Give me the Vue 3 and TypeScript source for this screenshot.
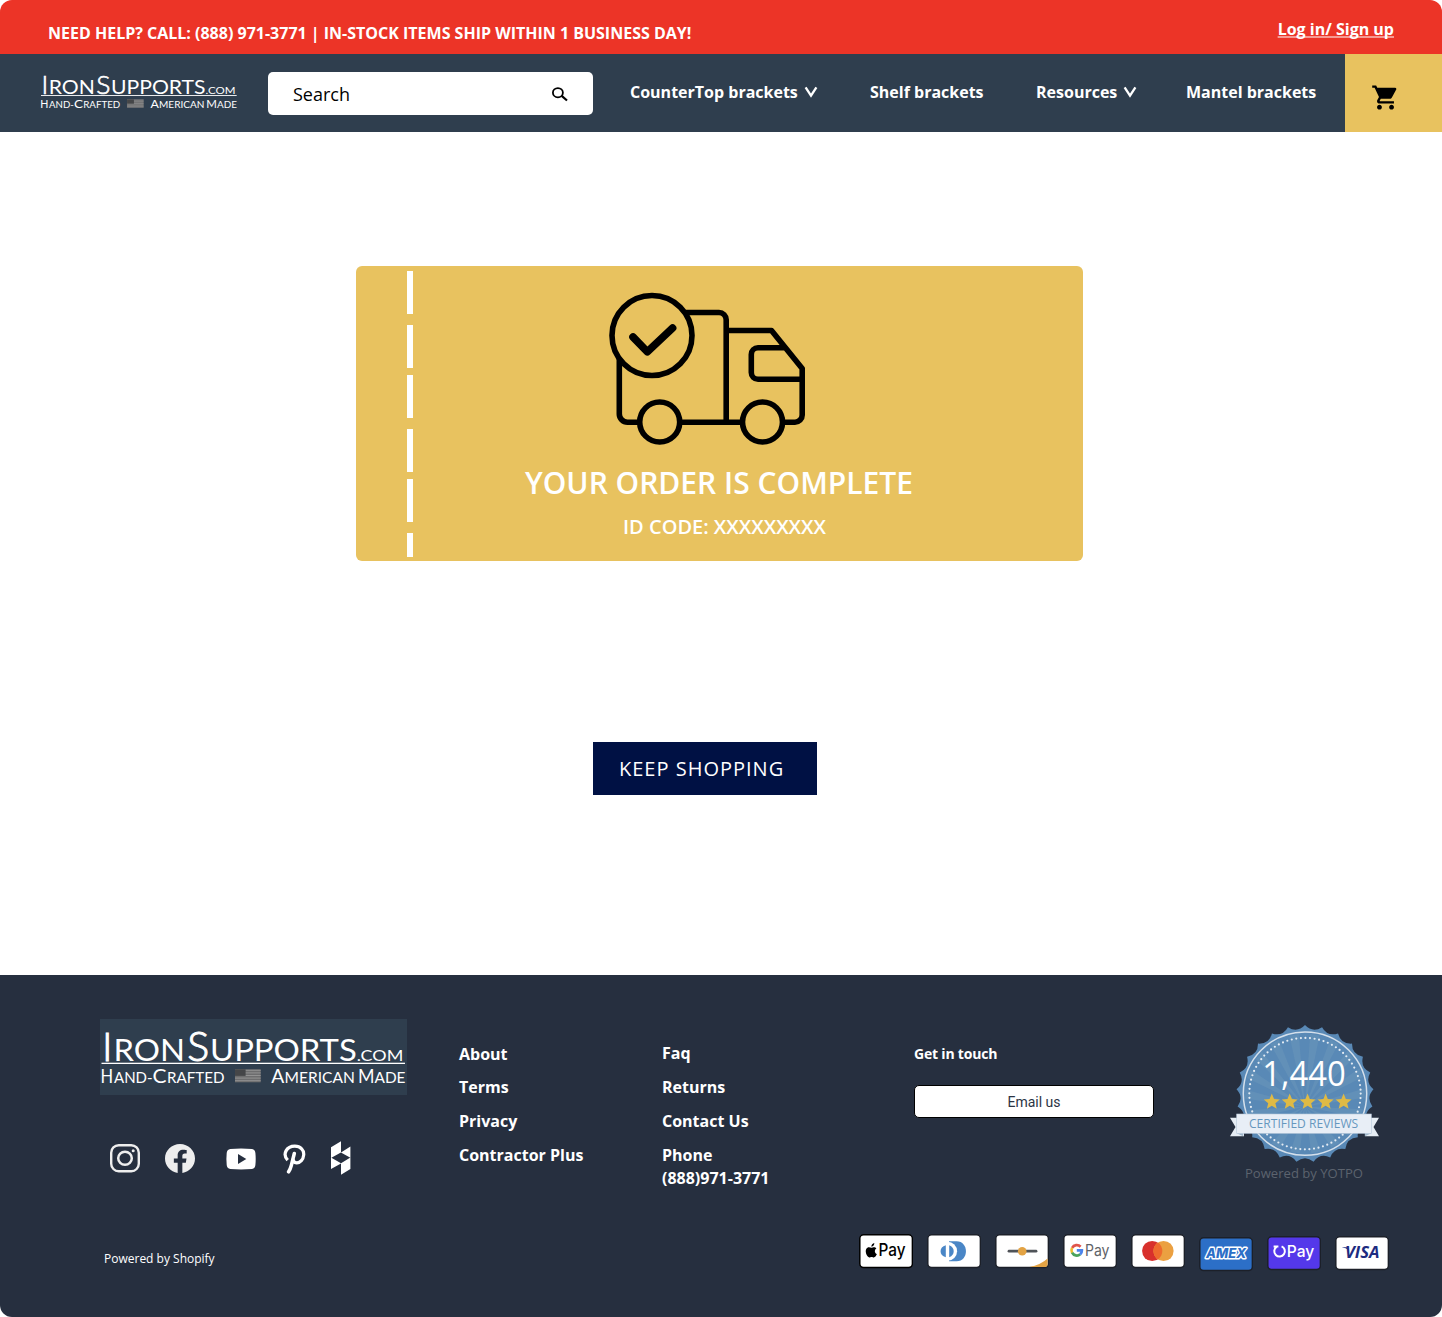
<script setup lang="ts">
interface NavItem {
  label: string
  menu: boolean
}

const navItems: NavItem[] = [
  { label: 'CounterTop brackets', menu: true },
  { label: 'Shelf brackets', menu: false },
  { label: 'Resources', menu: true },
  { label: 'Mantel brackets', menu: false },
]

const companyLinks: string[] = ['About', 'Terms', 'Privacy', 'Contractor Plus']
const supportLinks: string[] = ['Faq', 'Returns', 'Contact Us']

// Wordmark pieces: large initials alternate with small capitals
interface LogoPiece {
  t: string
  x: number
  y: number
  size: number
  w: number
  light?: boolean
}
const logoPieces: LogoPiece[] = [
  { t: 'I', x: 2.1, y: 42, size: 40, w: 10.5, light: true },
  { t: 'RON', x: 13.5, y: 42, size: 30.5, w: 71.5 },
  { t: 'S', x: 87.2, y: 42, size: 41, w: 22, light: true },
  { t: 'UPPORTS', x: 110, y: 42, size: 30.5, w: 146.7 },
  { t: '.COM', x: 256.8, y: 42, size: 15.5, w: 46.500 },
  { t: 'H', x: 0.5, y: 63.6, size: 18.6, w: 12.6 },
  { t: 'AND-', x: 14, y: 63.6, size: 15, w: 38.5 },
  { t: 'C', x: 52.5, y: 63.6, size: 18.6, w: 14 },
  { t: 'RAFTED', x: 67, y: 63.6, size: 15, w: 57.5 },
  { t: 'A', x: 171.3, y: 63.6, size: 18.6, w: 13 },
  { t: 'MERICAN', x: 184.6, y: 63.6, size: 15, w: 70.3 },
  { t: 'M', x: 257.9, y: 63.6, size: 18.6, w: 16.5 },
  { t: 'ADE', x: 274.5, y: 63.6, size: 15, w: 31 },
]

// Geometry of the review seal
const cx = 95
const cy = 83.6
const polar = (r: number, deg: number): string => {
  const a = ((deg - 90) * Math.PI) / 180
  return `${(cx + r * Math.cos(a)).toFixed(2)} ${(cy + r * Math.sin(a)).toFixed(2)}`
}
const points = 25
const step = 360 / points
let sealPath = `M${polar(68.6, 0)}`
for (let i = 0; i < points; i++) {
  sealPath += ` Q${polar(61, (i + 0.5) * step)} ${polar(68.6, (i + 1) * step)}`
}
sealPath += 'Z'

const rays: string[] = Array.from({ length: 18 }, (_, i) => {
  const a = i * 20 + 5
  return `M${cx} ${cy + 13}L${polar(60, a)}L${polar(60, a + 9)}Z`
})

const star = (x: number, y: number, r: number): string =>
  Array.from({ length: 10 }, (_, i) => {
    const a = ((i * 36 - 90) * Math.PI) / 180
    const d = i % 2 ? r * 0.45 : r
    return `${(x + d * Math.cos(a)).toFixed(2)},${(y + d * Math.sin(a)).toFixed(2)}`
  }).join(' ')
const stars: string[] = [61.8, 79.7, 97.6, 115.6, 133.6].map((x) => star(x, 92, 8.4))

const brands: string[] = ['apple', 'diners', 'discover', 'google', 'mastercard', 'amex', 'shop', 'visa']
</script>

<template>
  <div class="page">
    <div class="topbar">
      <p>NEED HELP? CALL: (888) 971-3771 | IN-STOCK ITEMS SHIP WITHIN 1 BUSINESS DAY!</p>
      <a class="login">Log in/ Sign up</a>
    </div>

    <header class="header">
      <svg class="logo header-logo" width="198" height="49" viewBox="0 0 307 76">
        <text v-for="p in logoPieces" :key="p.t" :class="{ light: p.light }" :x="p.x" :y="p.y" :font-size="p.size" :textLength="p.w" lengthAdjust="spacingAndGlyphs">{{ p.t }}</text>
        <rect x="1.5" y="43.6" width="303.5" height="1.4" fill="#fff" />
        <rect x="135" y="50.3" width="25.7" height="13" fill="#6d6d6e" />
        <path d="M135 51.3h25.7M135 53.9h25.7M135 56.5h25.7M135 59.1h25.7M135 61.7h25.7" stroke="#929292" stroke-width="1" />
        <rect x="135" y="50.3" width="10.6" height="6.6" fill="#454648" />
      </svg>
      <div class="search">
        <span>Search</span>
        <svg width="18" height="16" viewBox="0 0 18 16" fill="none" stroke="#000">
          <ellipse cx="6.9" cy="6.7" rx="5" ry="4.6" stroke-width="1.8" />
          <path d="M10.7 9.9l5.300 4.600" stroke-width="2.2" />
        </svg>
      </div>
      <nav class="nav">
        <a v-for="item in navItems" :key="item.label">
          {{ item.label }}
          <svg v-if="item.menu" width="14" height="12" viewBox="0 0 14 12">
            <path d="M1.6 1.400L7 9.600l5.400-8.200" fill="none" stroke="#fff" stroke-width="2.300" />
          </svg>
        </a>
      </nav>
      <div class="cart">
        <svg width="29" height="29" viewBox="0 0 24 24">
          <path d="M7 18c-1.100 0-1.990.9-1.990 2S5.900 22 7 22s2-.9 2-2-.9-2-2-2zM1 2v2h2l3.600 7.590-1.350 2.450c-.16.28-.25.61-.25.96 0 1.100.9 2 2 2h12v-2H7.420c-.14 0-.25-.11-.25-.25l.03-.12.9-1.630h7.450c.75 0 1.410-.41 1.750-1.030l3.580-6.490A1 1 0 0 0 20 4H5.210l-.94-2H1zm16 16c-1.100 0-1.990.9-1.990 2s.89 2 1.990 2 2-.9 2-2-.9-2-2-2z" />
        </svg>
      </div>
    </header>

    <main class="main">
      <section class="ticket">
        <div class="perforation"><i v-for="n in 6" :key="n"></i></div>
        <div class="ticket-body">
          <svg class="truck" width="198" height="154" viewBox="608 292 198 154" fill="none" stroke="#000" stroke-width="5.600">
            <circle cx="652" cy="335.500" r="40" />
            <path d="M633 337l14.400 14.800L672.600 328" stroke-width="7.600" stroke-linecap="round" stroke-linejoin="round" />
            <path d="M686 312.500h33a7.200 7.200 0 0 1 7.200 7.200V422M619.300 359v55a8.200 8.200 0 0 0 8.200 8.200h10.500M682 422.200h58M728 330.500h43.500l30.700 38v46.500a7.200 7.200 0 0 1-7.200 7.200H785M786 347.800h-28a6.700 6.700 0 0 0-6.700 6.700v18a6.700 6.700 0 0 0 6.700 6.700H802" stroke-linejoin="round" />
            <circle cx="659.700" cy="422" r="20" />
            <circle cx="762.500" cy="422" r="20" />
          </svg>
          <h1>YOUR ORDER IS COMPLETE</h1>
          <p>ID CODE: XXXXXXXXX</p>
        </div>
      </section>
      <button class="keep">KEEP SHOPPING</button>
    </main>

    <footer class="footer">
      <div class="columns">
        <div class="brand">
          <svg class="logo footer-logo" width="307" height="76" viewBox="0 0 307 76">
            <text v-for="p in logoPieces" :key="p.t" :class="{ light: p.light }" :x="p.x" :y="p.y" :font-size="p.size" :textLength="p.w" lengthAdjust="spacingAndGlyphs">{{ p.t }}</text>
            <rect x="1.500" y="43.700" width="303.500" height="1.300" fill="#fff" />
            <rect x="135" y="50.300" width="25.700" height="13" fill="#6d6d6e" />
            <path d="M135 51.300h25.700M135 53.900h25.700M135 56.500h25.700M135 59.100h25.700M135 61.700h25.700" stroke="#929292" stroke-width="1" />
            <rect x="135" y="50.300" width="10.600" height="6.600" fill="#454648" />
          </svg>
          <div class="social">
            <svg width="30" height="29" viewBox="0 0 30 29" fill="none" stroke="#eee">
              <rect x="1.200" y="1.200" width="27.600" height="26" rx="7.500" stroke-width="2.400" />
              <ellipse cx="15" cy="14.200" rx="6.800" ry="6.500" stroke-width="2.500" />
              <circle cx="23.200" cy="6.700" r="1.500" fill="#eee" stroke="none" />
            </svg>
            <svg width="30" height="29" viewBox="0 0 24 24" preserveAspectRatio="none" fill="#eee">
              <path d="M24 12.070C24 5.440 18.630.07 12 .07S0 5.440 0 12.070c0 5.990 4.390 10.950 10.130 11.850v-8.380H7.080v-3.470h3.050V9.430c0-3.010 1.790-4.670 4.530-4.670 1.310 0 2.690.24 2.690.24v2.950h-1.520c-1.490 0-1.950.93-1.950 1.870v2.250h3.320l-.53 3.470h-2.790v8.380C19.610 23.020 24 18.060 24 12.070z" />
            </svg>
            <svg width="30" height="22" viewBox="0 0 30 22">
              <path d="M4.300 1Q15 0 26 1q3.100.4 3.400 4 .6 6 0 12-.3 3.600-3.400 4-11 .9-21.700 0-3.300-.4-3.600-4-.6-6 0-12Q1 1.400 4.300 1z" fill="#fff" />
              <path d="M12 6v10l8.300-5z" fill="#262f3f" />
            </svg>
            <svg width="24" height="30" viewBox="0 0 24 30" fill="none" stroke="#fff">
              <path d="M4.700 16.200C-1 10 3.600 2.200 11.800 2.200c6 0 9.300 4 8.900 8.600-.4 4.800-3.500 8.200-7.100 8-2.500-.2-3.800-2-3.700-4" stroke-width="3.200" />
              <path d="M11.300 9.500L8.300 21.500q-.9 3.500-2.700 6.300" stroke-width="3.500" stroke-linecap="round" />
            </svg>
            <svg width="20" height="34" viewBox="0 0 20 34" fill="#fff">
              <path d="M0 6.200L10 .2v11.300L19.400 5.500v11.200L9.900 11.400.4 16.700H0zM0 16.700h.4L10 22.300l9-5.600h.4v11.400L10 33.800V22.500L0 28z" />
            </svg>
          </div>
          <p class="shopify">Powered by Shopify</p>
        </div>

        <ul class="links company">
          <li v-for="l in companyLinks" :key="l">{{ l }}</li>
        </ul>
        <ul class="links">
          <li v-for="l in supportLinks" :key="l">{{ l }}</li>
          <li>Phone<br />(888)971-3771</li>
        </ul>

        <div class="touch">
          <h2>Get in touch</h2>
          <button>Email us</button>
        </div>

        <svg class="seal" width="190" height="180" viewBox="0 0 190 180">
          <path :d="sealPath" fill="#5989b6" />
          <circle :cx="cx" :cy="cy" r="61.700" fill="#5989b6" stroke="#d5e0eb" stroke-width="1.500" />
          <path v-for="r in rays" :key="r" :d="r" fill="#7ba3bd" opacity=".28" />
          <circle :cx="cx" :cy="cy" r="55.700" fill="none" stroke="#e3ebf3" stroke-width="2.200" stroke-linecap="round" stroke-dasharray="0 4.605" />
          <text x="52.300" y="76.300" font-size="34" textLength="83.500" lengthAdjust="spacingAndGlyphs" fill="#fff">1,440</text>
          <polygon v-for="s in stars" :key="s" :points="s" fill="#dfba45" />
          <path d="M20 107.700h14v18.600H20l5.500-9.300zM169 107.700h-14v18.600h14l-5.500-9.300z" fill="#e6edf4" />
          <path d="M26.700 123.300l6.500 3V123.300zM161.300 123.300l-6.500 3V123.300z" fill="#9fb6ca" />
          <rect x="26.700" y="104" width="134.600" height="19.300" fill="#e8eef6" stroke="#b7c9da" stroke-width=".6" />
          <text x="39" y="118" font-size="12.200" textLength="109.200" lengthAdjust="spacingAndGlyphs" fill="#6697be">CERTIFIED REVIEWS</text>
          <text x="35" y="168" font-size="13.300" textLength="118" lengthAdjust="spacingAndGlyphs" fill="#5c636e">Powered by YOTPO</text>
        </svg>
      </div>

      <div class="cards">
        <svg v-for="b in brands" :key="b" :class="['card', b]" width="54" height="35" viewBox="0 0 54 35">
          <rect x=".8" y=".8" width="52.600" height="32.800" rx="3.800" :fill="b === 'amex' ? '#2c6fc7' : b === 'shop' ? '#5438ea' : '#fff'" :stroke="b === 'apple' ? '#000' : '#1c2029'" stroke-width="1.500" />
          <g v-if="b === 'apple'">
            <path d="M14.900 13.200c1.100 0 2 .5 2.500 1.300-2.300 1.400-1.900 4.700.5 5.600-.8 2-1.900 3.300-3.100 3.300-.8 0-1.200-.5-2.200-.5s-1.500.5-2.200.5c-2.400 0-5.700-7.300-2-9.600 1.700-1 3 0 4 0 .8 0 1.500-.6 2.500-.6zM12.400 12.700c-.1-2 1.300-3.400 2.900-3.700.2 1.900-1.100 3.600-2.900 3.700z" />
            <text x="19.500" y="22.300" font-family="Inter, sans-serif" font-size="17" font-weight="500" textLength="27" lengthAdjust="spacingAndGlyphs">Pay</text>
          </g>
          <g v-else-if="b === 'diners'">
            <path d="M22 7.200h7.500c12.600 0 12.600 20 0 20H22z" fill="#4a86c6" />
            <circle cx="20.600" cy="17.200" r="9.500" fill="#fff" />
            <path d="M18.800 11.200c-7 1.600-7 10.400 0 12zM22.200 11.200c6 1.800 6 10.200 0 12z" fill="#4a86c6" />
          </g>
          <g v-else-if="b === 'discover'">
            <path d="M14 17.200h27" stroke="#4f5358" stroke-width="2.800" stroke-linecap="round" />
            <circle cx="27.200" cy="17.200" r="4.300" fill="#e3a344" />
            <path d="M34.500 33Q45.500 31 52.600 24.500v5.700q0 2.800-2.800 2.800z" fill="#e3a344" />
          </g>
          <g v-else-if="b === 'google'">
            <g fill="none" stroke-width="2.700">
              <path d="M17.600 12.800A5.300 5.300 0 0 0 9.100 13.900" stroke="#e0544a" />
              <path d="M9.100 13.800A5.300 5.300 0 0 0 9.100 18.800" stroke="#efbd2f" />
              <path d="M9.100 18.600A5.300 5.300 0 0 0 17.200 20.300" stroke="#4ba35c" />
              <path d="M17.100 20.400Q19 18.800 18.900 16.400H13.800" stroke="#4a83ec" />
            </g>
            <text x="22" y="22" font-family="Inter, sans-serif" font-size="16" font-weight="400" fill="#5f6368" textLength="24.500" lengthAdjust="spacingAndGlyphs">Pay</text>
          </g>
          <g v-else-if="b === 'mastercard'">
            <circle cx="21.200" cy="17" r="10.100" fill="#d8302c" />
            <circle cx="32.500" cy="17" r="10.100" fill="#eba041" />
            <path d="M26.850 8.600a10.100 10.100 0 0 1 0 16.800 10.100 10.100 0 0 1 0-16.800z" fill="#ee6a2d" />
          </g>
          <text v-else-if="b === 'amex'" x="7" y="21.400" font-family="Inter, sans-serif" font-size="13" font-weight="800" font-style="italic" fill="#2c6fc7" stroke="#fff" stroke-width="2.800" paint-order="stroke" stroke-linejoin="round" textLength="40" lengthAdjust="spacingAndGlyphs">AMEX</text>
          <g v-else-if="b === 'shop'">
            <path d="M6.600 10.600h4.800M9.600 10.800a5.300 5.300 0 1 0 5-.5" fill="none" stroke="#fff" stroke-width="2" />
            <text x="19.800" y="21" font-family="Inter, sans-serif" font-size="16.500" font-weight="500" fill="#fff" textLength="27.500" lengthAdjust="spacingAndGlyphs">Pay</text>
          </g>
          <g v-else>
            <path d="M7.300 11.200h4.500l1.500 2.600q-2.300-1.900-6-2.200z" fill="#1d2b80" />
            <text x="10" y="22.200" font-family="Open Sans, sans-serif" font-size="15.500" font-weight="700" font-style="italic" fill="#1d2b80" textLength="34.500" lengthAdjust="spacingAndGlyphs">VISA</text>
          </g>
        </svg>
      </div>
    </footer>
  </div>
</template>

<style>
body {
  margin: 0;
  background: #fff;
}
</style>

<style scoped>
.page {
  width: 1442px;
  height: 1317px;
  overflow: hidden;
  border-radius: 12px;
  display: flex;
  flex-direction: column;
  font-family: 'Open Sans', sans-serif;
  color: #fff;
  background: #fff;
}
p, h1, h2, ul { margin: 0; padding: 0; }
ul { list-style: none; }
svg { display: block; flex: none; }

.logo text { font-family: Lato, sans-serif; fill: #fff; }
.logo .light { font-weight: 300; stroke: #fff; stroke-width: 1px; }

.topbar {
  height: 54px;
  background: #ec3427;
  display: flex;
  justify-content: space-between;
  padding: 0 48px;
  font-size: 16px;
  font-weight: 700;
  line-height: 22px;
  box-sizing: border-box;
  white-space: nowrap;
}
.topbar p { padding-top: 22px; }
.login {
  padding-top: 18px;
  text-decoration: underline rgba(255, 255, 255, 0.5);
  text-decoration-thickness: 2px;
  text-decoration-skip-ink: none;
}

.header {
  height: 78px;
  background: #2f3e4e;
  display: flex;
}
.header-logo { margin: 13px 0 0 40px; }
.search {
  width: 325px;
  height: 43px;
  margin: 18px 0 0 30px;
  padding: 0 24px 0 25px;
  box-sizing: border-box;
  background: #fff;
  border-radius: 5px;
  color: #000;
  display: flex;
  align-items: center;
  justify-content: space-between;
  font-size: 18px;
  line-height: 26px;
}
.search span { padding-top: 1px; }
.nav {
  margin-left: 37px;
  width: 715px;
  display: grid;
  grid-template-columns: 240px 166px 150px 159px;
  padding-top: 27px;
  box-sizing: border-box;
  font-size: 16px;
  font-weight: 700;
  line-height: 22px;
  white-space: nowrap;
}
.nav a { display: flex; gap: 6px; height: 22px; }
.nav svg { margin-top: 5px; }
.cart { width: 97px; background: #e8c25f; }
.cart svg { margin: 29px 0 0 26px; }

.main {
  height: 843px;
  display: flex;
  flex-direction: column;
}
.ticket {
  width: 727px;
  height: 295px;
  margin: 134px 0 0 356px;
  border-radius: 6px;
  background: #e8c25f;
  display: flex;
}
.perforation {
  width: 6px;
  height: 286px;
  margin: 5px 0 0 51px;
  display: flex;
  flex-direction: column;
}
.perforation i { flex: none; height: 43px; margin-bottom: 11px; background: #fff; }
.perforation i:nth-child(even) { margin-bottom: 7px; }
.perforation i:last-child { height: 24px; margin-bottom: 0; }
.ticket-body { flex: 1; white-space: nowrap; }
.truck { margin: 26px 0 0 195px; }
.ticket h1 {
  margin: 16px 0 0 112px;
  font-size: 30px;
  font-weight: 600;
  line-height: 41px;
}
.ticket p {
  margin: 10px 0 0 210px;
  font-size: 20px;
  font-weight: 600;
  line-height: 27px;
}
.keep {
  width: 224px;
  height: 53px;
  margin: 181px 0 0 593px;
  padding: 0 0 0 26px;
  border: 0;
  background: #001144;
  color: #fff;
  font: 400 20px/27px 'Open Sans', sans-serif;
  letter-spacing: 1px;
  text-align: left;
}

.footer {
  height: 342px;
  background: #262f3f;
}
.columns {
  height: 258px;
  display: grid;
  grid-template-columns: 359px 203px 252px 296px 190px;
  padding-left: 100px;
}
.footer-logo { margin-top: 44px; background: #2f3e4e; }
.social {
  display: flex;
  align-items: flex-start;
  height: 34px;
  margin: 46px 0 0 10px;
}
.social svg { margin-top: 3px; }
.social svg:nth-child(2) { margin-left: 25px; }
.social svg:nth-child(3) { margin-left: 31px; margin-top: 6.500px; }
.social svg:nth-child(4) { margin-left: 27px; }
.social svg:nth-child(5) { margin-left: 23.700px; margin-top: 0; }
.shopify { margin: 75px 0 0 4px; font-size: 12px; line-height: 17px; }
.links {
  padding-top: 67px;
  font-size: 16px;
  font-weight: 700;
  line-height: 23px;
}
.links li { margin-bottom: 11px; }
.company { padding-top: 68px; }
.company li:first-child { margin-bottom: 10px; }
.touch h2 {
  margin-top: 69px;
  font-size: 14px;
  line-height: 20px;
  font-weight: 700;
  letter-spacing: -0.2px;
}
.touch button {
  display: block;
  width: 240px;
  height: 33px;
  margin-top: 21px;
  padding: 0;
  border: 1px solid #000;
  border-radius: 5px;
  background: #fff;
  color: #2b3444;
  font: 400 14px/20px Roboto, sans-serif;
}
.seal { margin-top: 35px; }
.cards { display: flex; gap: 14.050px; margin-left: 859px; }
.cards .card { margin-top: 1px; }
.cards .amex { margin-top: 3.500px; }
.cards .shop, .cards .visa { margin-top: 3px; }
</style>
